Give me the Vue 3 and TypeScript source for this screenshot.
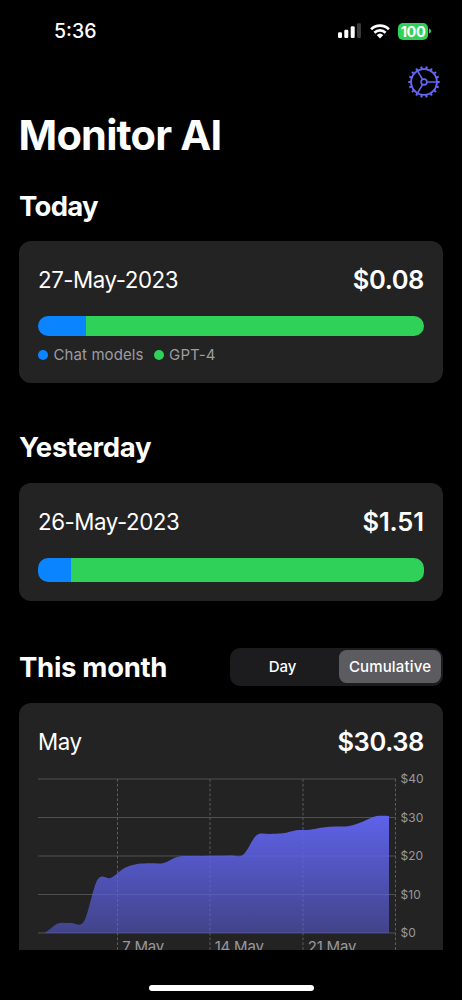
<script setup lang="ts">
interface Segment {
  name: string
  color: string
  share: number
}

interface DayUsage {
  id: string
  title: string
  date: string
  amount: string
  segments: Segment[]
  legend: boolean
}

const days: DayUsage[] = [
  {
    id: 'today',
    title: 'Today',
    date: '27-May-2023',
    amount: '$0.08',
    segments: [
      { name: 'Chat models', color: '#0a84ff', share: 12.5 },
      { name: 'GPT-4', color: '#30d158', share: 87.5 },
    ],
    legend: true,
  },
  {
    id: 'yesterday',
    title: 'Yesterday',
    date: '26-May-2023',
    amount: '$1.51',
    segments: [
      { name: 'Chat models', color: '#0a84ff', share: 8.6 },
      { name: 'GPT-4', color: '#30d158', share: 91.4 },
    ],
    legend: false,
  },
]

// Chart geometry, in the svg's own units
const top = 6
const bottom = 160
const stepX = 13.25
const startX = 6.5
const toY = (usd: number): number => bottom - (usd / 40) * (bottom - top)

const ticks = [40, 30, 20, 10, 0]
const weeks = [
  { x: 79.5, label: '7 May' },
  { x: 172, label: '14 May' },
  { x: 265, label: '21 May' },
  { x: 357.5, label: '' },
]

const totals = [
  0.1, 2.5, 2.6, 3.1, 13.8, 14.3, 16.8, 17.9, 18.1, 18.2, 19.75, 20, 20, 20.05,
  20.1, 20.4, 25.4, 25.7, 25.9, 26.7, 26.8, 27.4, 27.65, 27.8, 28.9, 30.3, 30.4,
]

const points = totals.map((v, i) => ({ x: startX + i * stepX, y: toY(v) }))

function curve(): string {
  const at = (i: number) => points[Math.max(0, Math.min(points.length - 1, i))]
  let d = `M${points[0].x} ${bottom}L${points[0].x} ${points[0].y}`
  for (let i = 0; i < points.length - 1; i++) {
    const a = at(i - 1)
    const b = at(i)
    const c = at(i + 1)
    const e = at(i + 2)
    d += `C${b.x + stepX / 3} ${b.y + (c.y - a.y) / 6} ${c.x - stepX / 3} ${c.y - (e.y - b.y) / 6} ${c.x} ${c.y}`
  }
  return `${d}V${bottom}Z`
}

const area = curve()
const teeth = Array.from({ length: 18 }, (_, i) => i * 20)
</script>

<template>
  <div class="screen">
    <header class="status">
      <span class="clock">5:36</span>
      <div class="indicators">
        <svg class="signal" width="24" height="16" viewBox="0 0 24 16">
          <rect x="0" y="9.3" width="4" height="5.6" rx="1.2" fill="#fff" />
          <rect x="6.3" y="6.8" width="4" height="8.1" rx="1.2" fill="#fff" />
          <rect x="12.7" y="3.3" width="4" height="11.6" rx="1.2" fill="#fff" />
          <rect x="19" y="0.3" width="4" height="14.6" rx="1.2" fill="#3a3a3a" />
        </svg>
        <svg class="wifi" width="20" height="15" viewBox="0 0 20 15">
          <g fill="none" stroke="#fff" stroke-width="2.7">
            <path d="M1.1 5.3A12.7 12.7 0 0 1 18.9 5.3" />
            <path d="M4.4 8.7A8 8 0 0 1 15.6 8.7" />
          </g>
          <path d="M6.7 11.1A4.8 4.8 0 0 1 13.3 11.1L10 14.5Z" fill="#fff" />
        </svg>
        <div class="battery"><span>100</span></div>
        <svg class="cap" width="3" height="6" viewBox="0 0 3 6">
          <path d="M0 0.6Q2.2 1.2 2.2 3T0 5.4Z" fill="#30d158" />
        </svg>
      </div>
    </header>

    <div class="toolbar">
      <svg width="34" height="34" viewBox="-17 -17 34 34">
        <g fill="none" stroke="#6468f2">
          <circle r="12.9" stroke-width="1.9" />
          <circle r="2.9" stroke-width="1.6" />
          <path d="M3 0H13M-1.5 -2.6L-6.5 -11.2M-1.5 2.6L-6.5 11.2" stroke-width="1.6" />
          <path v-for="t in teeth" :key="t" d="M13 0H15.7" stroke-width="2" :transform="`rotate(${t})`" />
        </g>
      </svg>
    </div>

    <h1>Monitor AI</h1>

    <main>
      <section v-for="day in days" :key="day.id" :class="day.id">
        <h2>{{ day.title }}</h2>
        <div class="card">
          <div class="row">
            <span class="date">{{ day.date }}</span>
            <span class="amount">{{ day.amount }}</span>
          </div>
          <div class="bar">
            <i
              v-for="s in day.segments"
              :key="s.name"
              :style="{ width: s.share + '%', background: s.color }"
            ></i>
          </div>
          <ul v-if="day.legend" class="legend">
            <li v-for="s in day.segments" :key="s.name">
              <b :style="{ background: s.color }"></b>{{ s.name }}
            </li>
          </ul>
        </div>
      </section>

      <section class="month">
        <div class="heading">
          <h2>This month</h2>
          <div class="segmented">
            <button type="button">Day</button>
            <button type="button" class="selected">Cumulative</button>
          </div>
        </div>
        <div class="card">
          <div class="row">
            <span class="date">May</span>
            <span class="amount">$30.38</span>
          </div>
          <svg class="chart" width="405" height="190" viewBox="0 0 405 190">
            <defs>
              <linearGradient id="fill" x1="0" y1="0" x2="0" y2="1">
                <stop offset="0" stop-color="#5e62e8" />
                <stop offset="1" stop-color="#5e62e8" stop-opacity="0.52" />
              </linearGradient>
            </defs>
            <line
              v-for="t in ticks"
              :key="t"
              x1="0"
              x2="358"
              :y1="toY(t)"
              :y2="toY(t)"
              stroke="#505052"
              stroke-width="1.2"
            />
            <line
              v-for="w in weeks"
              :key="w.x"
              :x1="w.x"
              :x2="w.x"
              :y1="top"
              y2="190"
              stroke="#5c5c5e"
              stroke-dasharray="2.8 2"
            />
            <path :d="area" fill="url(#fill)" />
            <text v-for="t in ticks" :key="t" class="tick" x="362.6" :y="toY(t) + 4.2">${{ t }}</text>
            <text v-for="w in weeks" :key="w.x" class="week" :x="w.x + 4.7" y="179">{{ w.label }}</text>
          </svg>
        </div>
      </section>
    </main>

    <footer><div class="home"></div></footer>
  </div>
</template>

<style>
html,
body {
  background: #000;
}
</style>

<style scoped>
.screen {
  display: flex;
  flex-direction: column;
  width: 462px;
  height: 1000px;
  overflow: hidden;
  background: #000;
  color: #fff;
  font-family: Inter, "Liberation Sans", sans-serif;
}
.status {
  display: flex;
  justify-content: space-between;
  align-items: center;
  flex: none;
  height: 62px;
  padding: 0 30px 0 54px;
  box-sizing: border-box;
}
.clock {
  font-size: 19.5px;
  font-weight: 500;
  letter-spacing: 0;
}
.indicators {
  display: flex;
  align-items: center;
}
.wifi {
  margin-left: 8px;
}
.battery {
  width: 30px;
  height: 17px;
  margin-left: 8.5px;
  border-radius: 5px;
  background: #30d158;
  font-size: 14.5px;
  font-weight: 700;
  line-height: 17px;
  letter-spacing: -0.4px;
  text-align: center;
}
.cap {
  margin-left: 1px;
}
.toolbar {
  display: flex;
  justify-content: flex-end;
  flex: none;
  height: 48px;
  padding: 2.7px 20.7px 0 0;
  box-sizing: border-box;
}
h1,
h2 {
  margin: 0;
  font-weight: 700;
}
h1 {
  flex: none;
  height: 52px;
  padding-left: 18.6px;
  font-size: 41.5px;
  line-height: 51px;
  letter-spacing: -0.8px;
}
main {
  height: 788px;
  flex: none;
  overflow: hidden;
  padding: 0 19px;
}
h2 {
  font-size: 27.5px;
  line-height: 34px;
  letter-spacing: -0.3px;
}
.today h2 {
  letter-spacing: -0.7px;
}
.today {
  padding-top: 26.5px;
}
.yesterday {
  padding-top: 47.5px;
}
.card {
  margin-top: 18.5px;
  padding: 19px 19px 0;
  border-radius: 12px;
  background: #232323;
  box-sizing: border-box;
}
.today .card {
  height: 141.5px;
}
.yesterday .card {
  height: 118px;
}
.row {
  display: flex;
  justify-content: space-between;
  align-items: center;
  height: 39px;
}
.date {
  font-size: 22.3px;
  letter-spacing: -0.45px;
}
.amount {
  font-size: 25.5px;
  font-weight: 600;
  letter-spacing: -0.4px;
}
.yesterday .amount {
  letter-spacing: -0.1px;
}
.bar {
  display: flex;
  height: 20px;
  margin-top: 17px;
  border-radius: 10px;
  overflow: hidden;
}
.yesterday .bar {
  height: 24px;
}
.legend {
  display: flex;
  gap: 10px;
  margin: 9px 0 0;
  padding: 0;
  list-style: none;
  color: #9c9ca1;
  font-size: 15px;
  line-height: 20px;
  letter-spacing: 0.1px;
}
.legend li {
  display: flex;
  align-items: center;
}
.legend b {
  width: 10px;
  height: 10px;
  margin-right: 5.5px;
  border-radius: 50%;
}
.month {
  padding-top: 47px;
}
.heading {
  display: flex;
  justify-content: space-between;
  align-items: center;
  height: 38px;
}
.segmented {
  display: flex;
  width: 213px;
  height: 38px;
  padding: 2.5px 2px 2.5px 4px;
  border-radius: 10px;
  background: #1c1c1e;
  box-sizing: border-box;
}
button {
  flex: 1;
  padding: 0 8px 0 0;
  border: 0;
  border-radius: 7.5px;
  background: none;
  color: #fff;
  font: 500 15px Inter, "Liberation Sans", sans-serif;
}
.selected {
  flex: 0 0 102px;
  padding: 0;
  background: #5b5b60;
  letter-spacing: 0.15px;
}
.month .card {
  height: 300px;
  margin-top: 17.5px;
  padding-right: 0;
}
.month .row {
  margin-right: 19px;
}
.chart {
  display: block;
  margin-top: 11.5px;
}
.tick {
  fill: #98989d;
  font-size: 12px;
}
.week {
  fill: #98989d;
  font-size: 15px;
  letter-spacing: -0.2px;
}
footer {
  display: flex;
  justify-content: center;
  padding-top: 34.5px;
}
.home {
  width: 165px;
  height: 6px;
  border-radius: 3px;
  background: #fff;
}
</style>
